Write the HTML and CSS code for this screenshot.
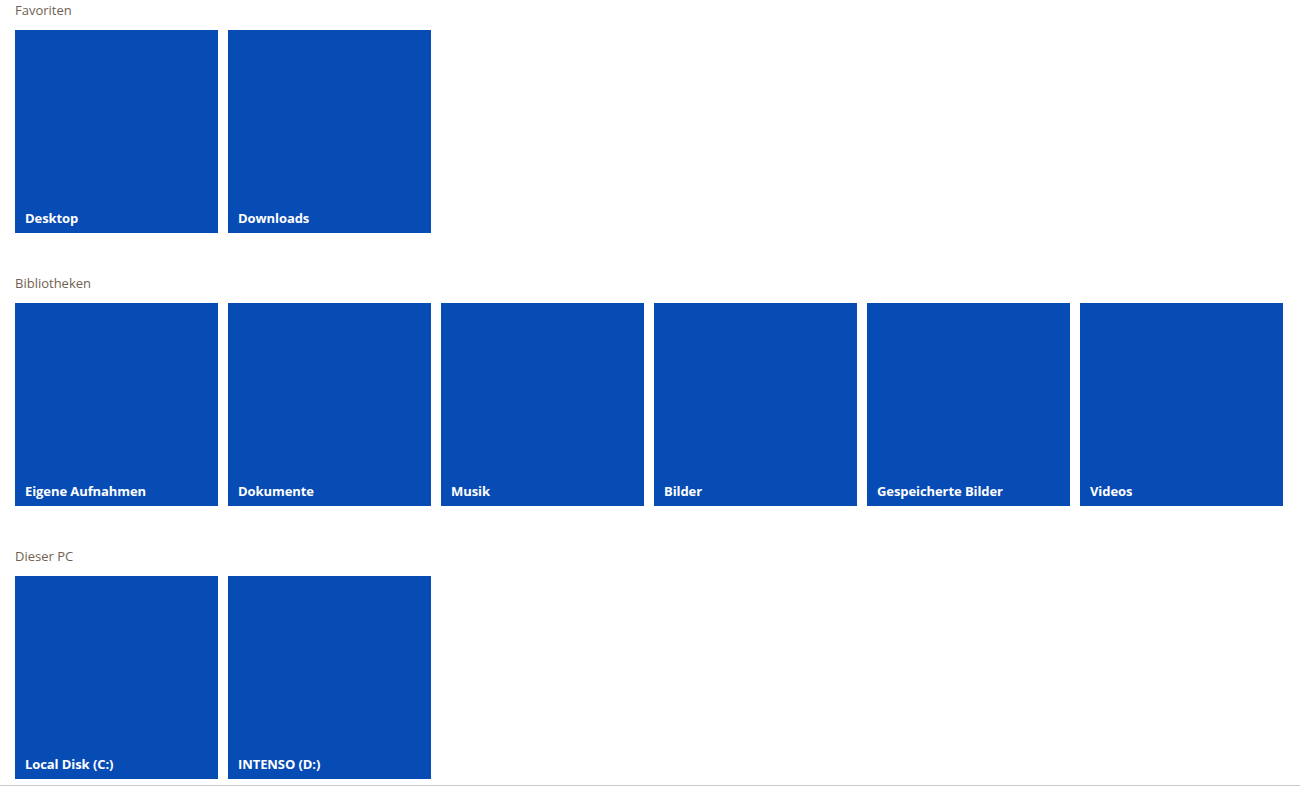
FILE: index.html
```html
<!DOCTYPE html>
<html lang="de">
<head>
<meta charset="utf-8">
<title>Explorer</title>
<link rel="stylesheet" href="styles.css">
</head>
<body>
<div class="page">
  <section class="group">
    <h2 class="group-title">Favoriten</h2>
    <div class="tiles">
      <div class="tile"><span class="tile-label">Desktop</span></div>
      <div class="tile"><span class="tile-label">Downloads</span></div>
    </div>
  </section>
  <section class="group">
    <h2 class="group-title">Bibliotheken</h2>
    <div class="tiles">
      <div class="tile"><span class="tile-label">Eigene Aufnahmen</span></div>
      <div class="tile"><span class="tile-label">Dokumente</span></div>
      <div class="tile"><span class="tile-label">Musik</span></div>
      <div class="tile"><span class="tile-label">Bilder</span></div>
      <div class="tile"><span class="tile-label">Gespeicherte Bilder</span></div>
      <div class="tile"><span class="tile-label">Videos</span></div>
    </div>
  </section>
  <section class="group">
    <h2 class="group-title">Dieser PC</h2>
    <div class="tiles">
      <div class="tile"><span class="tile-label">Local Disk (C:)</span></div>
      <div class="tile"><span class="tile-label">INTENSO (D:)</span></div>
    </div>
  </section>
</div>
</body>
</html>
```
FILE: styles.css
```css
html, body {
  margin: 0;
  padding: 0;
  background: #ffffff;
}
body {
  font-family: "Open Sans", "Noto Sans", "Liberation Sans", sans-serif;
  overflow: hidden;
}
.page {
  height: 785px;
  border-bottom: 1px solid #cacaca;
  padding: 0 15px;
  box-sizing: content-box;
}
.group {
  margin-bottom: 40px;
}
.group-title {
  margin: 0;
  height: 30px;
  font-size: 13px;
  font-weight: 400;
  line-height: 20px;
  color: #715f52;
}
.tiles {
  display: flex;
  gap: 10px;
}
.tile {
  width: 203px;
  height: 203px;
  background: #074bb4;
  display: flex;
  flex-direction: column;
  justify-content: flex-end;
  padding: 0 10px 7px;
  box-sizing: border-box;
}
.tile-label {
  color: #ffffff;
  font-size: 13px;
  font-weight: 700;
  line-height: 16px;
  letter-spacing: -0.08px;
}
```
